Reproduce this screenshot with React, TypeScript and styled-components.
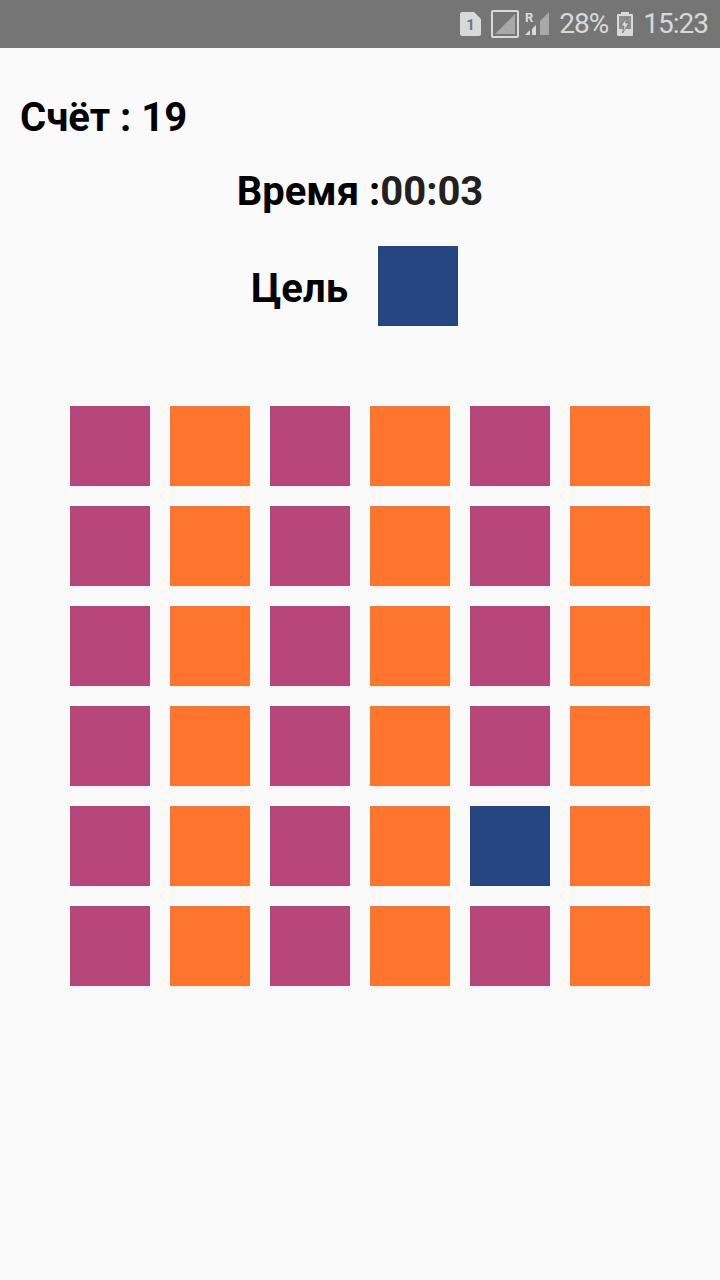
import React from "react";
import styled, { createGlobalStyle } from "styled-components";

const PURPLE = "#b7467a";
const ORANGE = "#ff752d";
const BLUE = "#264682";

const GlobalStyle = createGlobalStyle`
  html, body {
    margin: 0;
    padding: 0;
    background: #fafafa;
  }
`;

const Screen = styled.div`
  width: 720px;
  height: 1280px;
  background: #fafafa;
  font-family: Roboto, "Liberation Sans", sans-serif;
  overflow: hidden;
`;

const StatusBar = styled.div`
  height: 48px;
  background: #757575;
  display: flex;
  align-items: center;
  justify-content: flex-end;
  padding-right: 12px;
  color: #d9d9d9;
  font-size: 28px;
  letter-spacing: -1px;
`;

const StatusText = styled.span<{ $left: number }>`
  margin-left: ${(p) => p.$left}px;
  line-height: 48px;
`;

const StatusIcon = styled.svg<{ $left: number }>`
  margin-left: ${(p) => p.$left}px;
  display: block;
`;

const IconGlyph = styled.text`
  font-family: Roboto, "Liberation Sans", sans-serif;
  font-weight: 700;
  letter-spacing: 0;
`;

const Score = styled.div`
  margin-top: 46px;
  margin-left: 20px;
  height: 48px;
  line-height: 48px;
  font-size: 40px;
  font-weight: 700;
  color: #000;
`;

const Timer = styled.div`
  margin-top: 26px;
  height: 48px;
  line-height: 48px;
  text-align: center;
  font-size: 40px;
  font-weight: 700;
  color: #000;
`;

const TimerValue = styled.span`
  color: #212121;
`;

const GoalRow = styled.div`
  margin-top: 30px;
  display: flex;
  justify-content: center;
  align-items: center;
  padding-right: 11px;
`;

const GoalLabel = styled.span`
  font-size: 40px;
  font-weight: 700;
  color: #000;
  margin-right: 30px;
  padding-top: 4px;
`;

const Tile = styled.div<{ $color: string }>`
  width: 80px;
  height: 80px;
  background: ${(p) => p.$color};
`;

const Board = styled.div`
  margin: 80px 0 0 70px;
  display: grid;
  grid-template-columns: repeat(6, 80px);
  grid-auto-rows: 80px;
  gap: 20px;
`;

const SimIcon = () => (
  <StatusIcon $left={0} width="21" height="24" viewBox="0 0 21 24">
    <path d="M2 0h12l7 7v15a2 2 0 0 1-2 2H2a2 2 0 0 1-2-2V2a2 2 0 0 1 2-2z" fill="#d9d9d9" />
    <IconGlyph x="10.500" y="18" fontSize="15" textAnchor="middle" fill="#757575">
      1
    </IconGlyph>
  </StatusIcon>
);

const NoDataIcon = () => (
  <StatusIcon $left={10} width="28" height="28" viewBox="0 0 28 28">
    <rect x="1" y="1" width="26" height="26" rx="1" fill="none" stroke="#d9d9d9" strokeWidth="2" />
    <path d="M4 24L24 4v20z" fill="#a8a8a8" />
  </StatusIcon>
);

const SignalIcon = () => (
  <StatusIcon $left={6} width="24" height="24" viewBox="0 0 24 24">
    <IconGlyph x="0" y="10" fontSize="13" fill="#d9d9d9">
      R
    </IconGlyph>
    <path d="M0 23l5-5v5z" fill="#d9d9d9" />
    <path d="M7 23v-6l4-4v10z" fill="#d9d9d9" />
    <path d="M15 23V9l9-9v23z" fill="#a8a8a8" />
  </StatusIcon>
);

const BatteryIcon = () => (
  <StatusIcon $left={9} width="16" height="24" viewBox="0 0 16 24">
    <path d="M4 0h8v2h3a1 1 0 0 1 1 1v20a1 1 0 0 1-1 1H1a1 1 0 0 1-1-1V3a1 1 0 0 1 1-1h3z" fill="#d9d9d9" />
    <path d="M2 4h12v13H2z" fill="#8f8f8f" />
    <path d="M10 5L4 14h3l-1.500 7L12 11H8.500z" fill="#d9d9d9" stroke="#757575" strokeWidth="0.8" />
  </StatusIcon>
);

const rows = [0, 1, 2, 3, 4, 5];
const cols = [0, 1, 2, 3, 4, 5];

const tileColor = (row: number, col: number) => {
  if (row === 4 && col === 4) return BLUE;
  return col % 2 === 0 ? PURPLE : ORANGE;
};

const App: React.FC = () => {
  return (
    <Screen>
      <GlobalStyle />
      <StatusBar>
        <SimIcon />
        <NoDataIcon />
        <SignalIcon />
        <StatusText $left={10}>28%</StatusText>
        <BatteryIcon />
        <StatusText $left={10}>15:23</StatusText>
      </StatusBar>
      <Score>Счёт : 19</Score>
      <Timer>
        Время :<TimerValue>00:03</TimerValue>
      </Timer>
      <GoalRow>
        <GoalLabel>Цель</GoalLabel>
        <Tile $color={BLUE} />
      </GoalRow>
      <Board>
        {rows.map((row) =>
          cols.map((col) => <Tile key={`${row}-${col}`} $color={tileColor(row, col)} />)
        )}
      </Board>
    </Screen>
  );
};

export default App;
